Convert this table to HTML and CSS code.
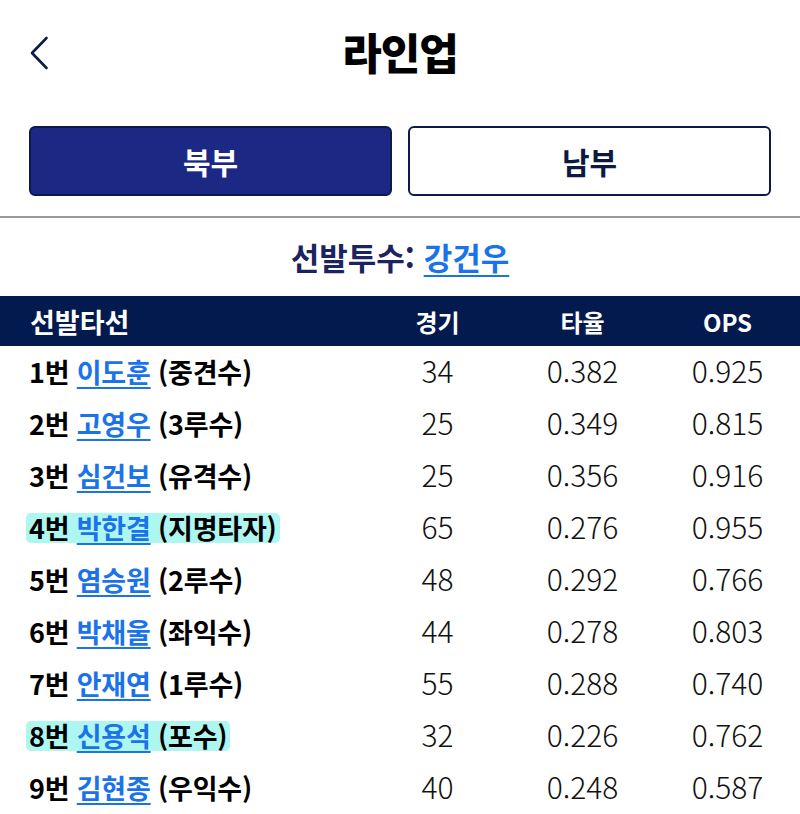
FILE: index.html
```html
<!DOCTYPE html>
<html lang="ko">
<head>
<meta charset="utf-8">
<link rel="stylesheet" href="styles.css">
</head>
<body>
<div class="page">
  <header class="topbar">
    <a class="back" href="#" aria-label="뒤로">
      <svg width="20" height="34" viewBox="0 0 20 34"><path d="M17.5 2 L3 17 L17.5 32" fill="none" stroke="#0d1b45" stroke-width="2.6" stroke-linecap="round" stroke-linejoin="round"/></svg>
    </a>
    <h1 class="title">라인업</h1>
  </header>

  <div class="tabs">
    <button class="tab active">북부</button>
    <button class="tab">남부</button>
  </div>

  <div class="divider"></div>

  <div class="pitcher">선발투수: <a href="#" class="link">강건우</a></div>

  <table class="lineup">
    <thead>
      <tr><th class="c-name">선발타선</th><th>경기</th><th>타율</th><th>OPS</th></tr>
    </thead>
    <tbody>
      <tr><td class="c-name"><span class="who">1번 <a href="#" class="link">이도훈</a> (중견수)</span></td><td>34</td><td>0.382</td><td>0.925</td></tr>
      <tr><td class="c-name"><span class="who">2번 <a href="#" class="link">고영우</a> (3루수)</span></td><td>25</td><td>0.349</td><td>0.815</td></tr>
      <tr><td class="c-name"><span class="who">3번 <a href="#" class="link">심건보</a> (유격수)</span></td><td>25</td><td>0.356</td><td>0.916</td></tr>
      <tr><td class="c-name"><span class="who hl">4번 <a href="#" class="link">박한결</a> (지명타자)</span></td><td>65</td><td>0.276</td><td>0.955</td></tr>
      <tr><td class="c-name"><span class="who">5번 <a href="#" class="link">염승원</a> (2루수)</span></td><td>48</td><td>0.292</td><td>0.766</td></tr>
      <tr><td class="c-name"><span class="who">6번 <a href="#" class="link">박채울</a> (좌익수)</span></td><td>44</td><td>0.278</td><td>0.803</td></tr>
      <tr><td class="c-name"><span class="who">7번 <a href="#" class="link">안재연</a> (1루수)</span></td><td>55</td><td>0.288</td><td>0.740</td></tr>
      <tr><td class="c-name"><span class="who hl">8번 <a href="#" class="link">신용석</a> (포수)</span></td><td>32</td><td>0.226</td><td>0.762</td></tr>
      <tr><td class="c-name"><span class="who">9번 <a href="#" class="link">김현종</a> (우익수)</span></td><td>40</td><td>0.248</td><td>0.587</td></tr>
    </tbody>
  </table>
</div>
</body>
</html>
```

FILE: styles.css
```css
* { box-sizing: border-box; }
html, body { margin: 0; padding: 0; background: #fff; }
body {
  font-family: "Noto Sans CJK KR", "Noto Sans", sans-serif;
  color: #000;
  width: 800px;
  height: 814px;
  overflow: hidden;
}
.page { width: 800px; }

.topbar {
  position: relative;
  height: 106px;
  display: flex;
  align-items: center;
  justify-content: center;
}
.back {
  position: absolute;
  left: 29px;
  top: 36px;
  display: block;
  width: 20px;
  height: 34px;
}
.back svg { display: block; }
.title {
  margin: 0;
  margin-top: -4px;
  font-size: 43px;
  font-weight: 900;
  letter-spacing: -1px;
  line-height: 1;
}

.tabs {
  display: flex;
  gap: 16px;
  padding: 20px 29px 0 29px;
}
.tab {
  flex: 1;
  height: 70px;
  border: 2.5px solid #0b1a4a;
  border-radius: 6px;
  background: #fff;
  color: #0b1a3e;
  font-family: inherit;
  font-size: 30px;
  font-weight: 700;
  padding: 0;
}
.tab.active {
  background: #1b2985;
  color: #fff;
}

.divider {
  height: 2px;
  background: #9a9a9a;
  margin-top: 20px;
}

.pitcher {
  text-align: center;
  font-size: 31px;
  font-weight: 700;
  color: #1b2360;
  height: 78px;
  line-height: 1;
  padding-top: 23px;
}
.link {
  color: #1a73e8;
  text-decoration: underline;
  text-decoration-thickness: 2px;
  text-underline-offset: 5px;
}

.lineup {
  width: 800px;
  border-collapse: collapse;
  table-layout: fixed;
}
.lineup th {
  background: #031a4f;
  color: #fff;
  font-size: 24px;
  font-weight: 700;
  height: 50px;
  width: 145px;
  text-align: center;
  padding: 0;
}
.lineup th.c-name {
  width: 365px;
  text-align: left;
  padding-left: 30px;
  font-size: 27px;
}
.lineup td {
  height: 52px;
  padding: 0 0 4px 0;
  text-align: center;
  font-size: 30px;
  font-weight: 300;
  color: #111;
}
.lineup td.c-name {
  text-align: left;
  padding-left: 26px;
}
.who {
  display: inline-block;
  font-size: 27px;
  font-weight: 700;
  color: #000;
  padding: 0 3px;
  line-height: 30px;
  border-radius: 5px;
  letter-spacing: -0.2px;
}
.who.hl { background: #aef6f0; }
.who .link { text-underline-offset: 4px; }
```
